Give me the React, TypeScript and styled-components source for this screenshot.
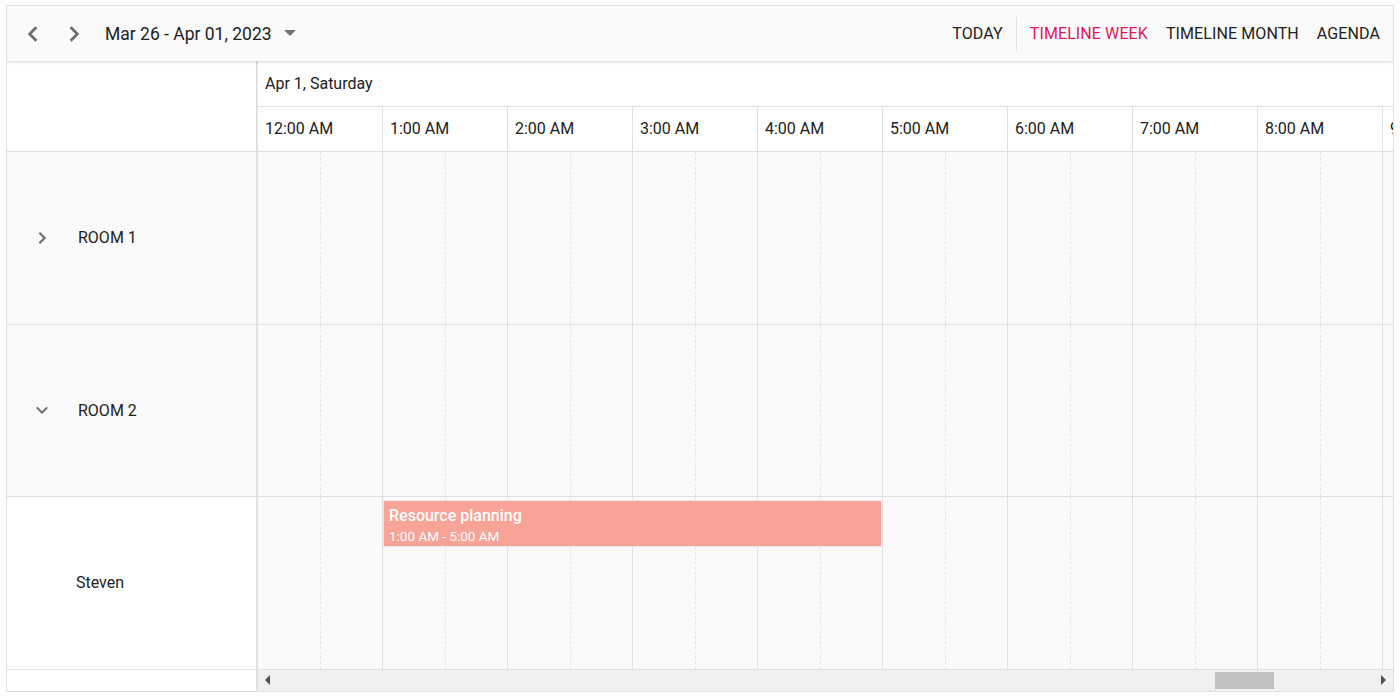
import React from "react";
import styled, { createGlobalStyle } from "styled-components";

const Global = createGlobalStyle`
  html, body { margin: 0; padding: 0; background: #fff; }
  body { font-family: Roboto, "Noto Sans", Arial, sans-serif; color: #212121; }
  * { box-sizing: border-box; }
`;

const HOUR_W = 125;
const ROW_H = 172.5;
const hours = Array.from({ length: 24 }, (_, i) => {
  const h = i % 12 === 0 ? 12 : i % 12;
  return `${h}:00 ${i < 12 ? "AM" : "PM"}`;
});

const Scheduler = styled.div`
  margin: 5px 0 0 6px;
  width: 1388px;
  height: 687px;
  border: 1px solid #e0e0e0;
  display: flex;
  flex-direction: column;
  background: #fff;
  overflow: hidden;
`;

const Toolbar = styled.div`
  height: 55px;
  flex: none;
  background: #fafafa;
  display: flex;
  align-items: center;
  box-shadow: 0 1px 3px rgba(0, 0, 0, 0.16);
  position: relative;
  z-index: 2;
  padding: 0 4px 0 10px;
`;

const NavButton = styled.button`
  width: 32px;
  height: 32px;
  border: none;
  background: transparent;
  display: flex;
  align-items: center;
  justify-content: center;
  padding: 0;
  margin-right: 9px;
  cursor: pointer;
`;

const DateRange = styled.div`
  display: flex;
  align-items: center;
  font-size: 17.5px;
  color: #212121;
  margin-left: 6px;
  gap: 12px;
`;

const Spacer = styled.div`
  flex: 1;
`;

const ViewButton = styled.div<{ $active?: boolean }>`
  font-size: 16px;
  text-transform: uppercase;
  color: ${(p) => (p.$active ? "#e3165b" : "#212121")};
  padding: 0 9px;
  letter-spacing: 0.1px;
`;

const Divider = styled.div`
  width: 1px;
  height: 34px;
  background: #e0e0e0;
  margin: 0 4px;
`;

const Body = styled.div`
  flex: 1;
  display: grid;
  grid-template-columns: 251px 1fr;
  grid-template-rows: 91px ${ROW_H * 3}px 1fr;
  min-height: 0;
`;

const Corner = styled.div`
  border-right: 2px solid #e0e0e0;
  border-bottom: 1px solid #e0e0e0;
  background: #fff;
`;

const HeaderArea = styled.div`
  overflow: hidden;
  border-bottom: 1px solid #e0e0e0;
`;

const DateRow = styled.div`
  height: 46px;
  border-bottom: 1px solid #e0e0e0;
  display: flex;
  align-items: center;
  padding-left: 7px;
  font-size: 16px;
  color: #212121;
`;

const TimeRow = styled.div`
  display: flex;
  height: 44px;
`;

const TimeCell = styled.div`
  flex: none;
  width: ${HOUR_W}px;
  border-right: 1px solid #e0e0e0;
  display: flex;
  align-items: center;
  padding: 0 0 2px 7px;
  font-size: 16px;
  color: #212121;
  white-space: nowrap;
`;

const ResourceColumn = styled.div`
  border-right: 2px solid #e0e0e0;
  display: flex;
  flex-direction: column;
`;

const ResourceCell = styled.div<{ $parent?: boolean }>`
  height: ${ROW_H}px;
  flex: none;
  border-bottom: 1px solid #e0e0e0;
  background: ${(p) => (p.$parent ? "#fafafa" : "#fff")};
  display: flex;
  align-items: center;
  padding-left: ${(p) => (p.$parent ? "23px" : "69px")};
  font-size: 16px;
  color: #212121;
`;

const ExpandIcon = styled.span`
  width: 24px;
  height: 24px;
  display: flex;
  align-items: center;
  justify-content: center;
  margin-right: 24px;
`;

const WorkArea = styled.div`
  position: relative;
  overflow: hidden;
  display: flex;
  flex-direction: column;
`;

const WorkRow = styled.div`
  height: ${ROW_H}px;
  flex: none;
  display: flex;
  border-bottom: 1px solid #e0e0e0;
  background: #fafafa;
`;

const WorkCell = styled.div`
  flex: none;
  width: ${HOUR_W}px;
  border-right: 1px solid #e0e0e0;
  display: flex;
`;

const HalfSlot = styled.div`
  width: 63px;
  border-right: 1px dashed #e6e6e6;
`;

const Event = styled.div`
  position: absolute;
  left: 125px;
  top: 348px;
  width: 499px;
  height: 47px;
  background: #f7a398;
  border: 1px solid #e8e8f0;
  color: #fff;
  padding: 5px 0 0 5px;
  display: flex;
  flex-direction: column;
  gap: 3px;
`;

const EventTitle = styled.div`
  font-size: 16px;
  font-weight: 500;
  line-height: 19px;
`;

const EventTime = styled.div`
  font-size: 13.5px;
  line-height: 17px;
`;

const ScrollSpacer = styled.div`
  border-right: 2px solid #e0e0e0;
  background: #fff;
`;

const ScrollTrack = styled.div`
  background: #f0f0f0;
  display: flex;
  align-items: center;
  position: relative;
  height: 21px;
`;

const ScrollArrow = styled.div<{ $right?: boolean }>`
  width: 0;
  height: 0;
  border-top: 5px solid transparent;
  border-bottom: 5px solid transparent;
  ${(p) =>
    p.$right
      ? "border-left: 5px solid #505050; margin-left: auto; margin-right: 7px;"
      : "border-right: 5px solid #505050; margin-left: 7px;"}
`;

const ScrollThumb = styled.div`
  position: absolute;
  left: 957px;
  top: 2px;
  width: 59px;
  height: 17px;
  background: #c1c1c1;
`;

const Chevron = ({ dir, size = 16 }: { dir: "left" | "right" | "down"; size?: number }) => {
  const pts =
    dir === "left"
      ? "11,2 5,8 11,14"
      : dir === "right"
      ? "5,2 11,8 5,14"
      : "2,5 8,11 14,5";
  return (
    <svg width={size} height={size} viewBox="0 0 16 16" fill="none">
      <polyline points={pts} stroke="#6b6b6b" strokeWidth={2.4} strokeLinecap="butt" strokeLinejoin="miter" />
    </svg>
  );
};

const Caret = () => (
  <svg width="12" height="7" viewBox="0 0 12 7">
    <polygon points="0,0 12,0 6,6" fill="#757575" />
  </svg>
);

export default function App() {
  const rows = [0, 1, 2];
  return (
    <>
      <Global />
      <Scheduler>
        <Toolbar>
          <NavButton aria-label="previous">
            <Chevron dir="left" size={18} />
          </NavButton>
          <NavButton aria-label="next">
            <Chevron dir="right" size={18} />
          </NavButton>
          <DateRange>
            Mar 26 - Apr 01, 2023
            <Caret />
          </DateRange>
          <Spacer />
          <ViewButton>Today</ViewButton>
          <Divider />
          <ViewButton $active>Timeline Week</ViewButton>
          <ViewButton>Timeline Month</ViewButton>
          <ViewButton>Agenda</ViewButton>
        </Toolbar>
        <Body>
          <Corner />
          <HeaderArea>
            <DateRow>Apr 1, Saturday</DateRow>
            <TimeRow>
              {hours.map((h) => (
                <TimeCell key={h}>{h}</TimeCell>
              ))}
            </TimeRow>
          </HeaderArea>
          <ResourceColumn>
            <ResourceCell $parent>
              <ExpandIcon>
                <Chevron dir="right" size={14} />
              </ExpandIcon>
              ROOM 1
            </ResourceCell>
            <ResourceCell $parent>
              <ExpandIcon>
                <Chevron dir="down" size={14} />
              </ExpandIcon>
              ROOM 2
            </ResourceCell>
            <ResourceCell>Steven</ResourceCell>
          </ResourceColumn>
          <WorkArea>
            {rows.map((r) => (
              <WorkRow key={r}>
                {hours.map((h) => (
                  <WorkCell key={h}>
                    <HalfSlot />
                  </WorkCell>
                ))}
              </WorkRow>
            ))}
            <Event>
              <EventTitle>Resource planning</EventTitle>
              <EventTime>1:00 AM - 5:00 AM</EventTime>
            </Event>
          </WorkArea>
          <ScrollSpacer />
          <ScrollTrack>
            <ScrollArrow />
            <ScrollThumb />
            <ScrollArrow $right />
          </ScrollTrack>
        </Body>
      </Scheduler>
    </>
  );
}
